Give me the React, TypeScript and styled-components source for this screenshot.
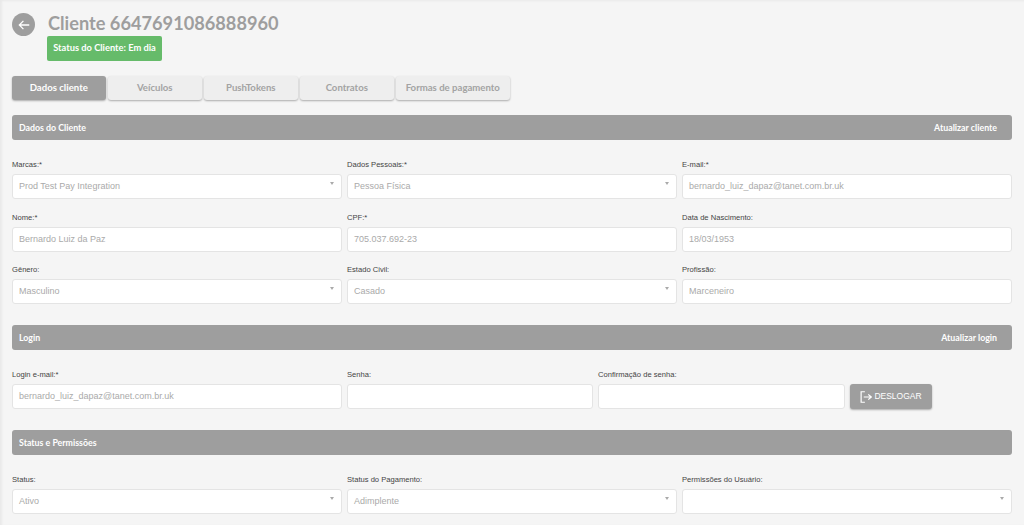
import React from "react";
import styled, { createGlobalStyle } from "styled-components";

const GlobalStyle = createGlobalStyle`
  html, body {
    margin: 0;
    padding: 0;
    background: #f5f5f5;
  }
  * { box-sizing: border-box; }
`;

const headingFont = `Lato, "Open Sans", sans-serif`;
const bodyFont = `"Liberation Sans", Arial, sans-serif`;

type FieldData = { label: string; value?: string; required?: boolean; select?: boolean };

const clientFields: FieldData[] = [
  { label: "Marcas:", value: "Prod Test Pay Integration", required: true, select: true },
  { label: "Dados Pessoais:", value: "Pessoa Física", required: true, select: true },
  { label: "E-mail:", value: "bernardo_luiz_dapaz@tanet.com.br.uk", required: true },
  { label: "Nome:", value: "Bernardo Luiz da Paz", required: true },
  { label: "CPF:", value: "705.037.692-23", required: true },
  { label: "Data de Nascimento:", value: "18/03/1953" },
  { label: "Gênero:", value: "Masculino", select: true },
  { label: "Estado Civil:", value: "Casado", select: true },
  { label: "Profissão:", value: "Marceneiro" },
];

const statusFields: FieldData[] = [
  { label: "Status:", value: "Ativo", select: true },
  { label: "Status do Pagamento:", value: "Adimplente", select: true },
  { label: "Permissões do Usuário:", select: true },
];

const tabs = ["Dados cliente", "Veículos", "PushTokens", "Contratos", "Formas de pagamento"];

const Field = ({ label, value, required, select }: FieldData) => (
  <FieldBox>
    <Label>
      {label}
      {required && "*"}
    </Label>
    <Control>
      <span>{value}</span>
      {select && <Caret />}
    </Control>
  </FieldBox>
);

const SectionHeader = ({ title, action }: { title: string; action?: string }) => (
  <SectionBar>
    <span>{title}</span>
    {action && <span>{action}</span>}
  </SectionBar>
);

const App = () => {
  return (
    <Page>
      <GlobalStyle />
      <Header>
        <BackButton>
          <svg width="14" height="14" viewBox="0 0 24 24" fill="none" stroke="#fff" strokeWidth="2.2">
            <path d="M21 12H4M11 5l-7 7 7 7" />
          </svg>
        </BackButton>
        <div>
          <Title>Cliente 6647691086888960</Title>
          <StatusBadge>Status do Cliente: Em dia</StatusBadge>
        </div>
      </Header>

      <Tabs>
        {tabs.map((tab, index) => (
          <Tab key={tab} $active={index === 0} $wide={index === 4}>
            {tab}
          </Tab>
        ))}
      </Tabs>

      <SectionHeader title="Dados do Cliente" action="Atualizar cliente" />
      <ThreeCols>
        {clientFields.map((field) => (
          <Field key={field.label} {...field} />
        ))}
      </ThreeCols>

      <SectionHeader title="Login" action="Atualizar login" />
      <LoginRow>
        <Field label="Login e-mail:" value="bernardo_luiz_dapaz@tanet.com.br.uk" required />
        <Field label="Senha:" />
        <Field label="Confirmação de senha:" />
        <LogoutButton>
          <svg width="12" height="12" viewBox="0 0 16 16" fill="none" stroke="#fff" strokeWidth="1.6">
            <path d="M6.5 1H1.5v14h5M5 8h10M11 4.5 15 8l-4 3.5" />
          </svg>
          DESLOGAR
        </LogoutButton>
      </LoginRow>

      <SectionHeader title="Status e Permissões" />
      <ThreeCols>
        {statusFields.map((field) => (
          <Field key={field.label} {...field} />
        ))}
      </ThreeCols>
    </Page>
  );
};

const Page = styled.div`
  height: 525px;
  overflow: hidden;
  padding: 13px 12px 0;
  background: #f5f5f5;
  box-shadow: inset 2px 1px 2px #e9e9e9;
`;

const Header = styled.header`
  display: flex;
  gap: 13px;
`;

const BackButton = styled.div`
  display: flex;
  align-items: center;
  justify-content: center;
  width: 23px;
  height: 23px;
  border-radius: 50%;
  background: #9e9e9e;
`;

const Title = styled.h1`
  margin: -1px 0 1px;
  font: 700 18.2px/23px ${headingFont};
  color: #9e9e9e;
`;

const StatusBadge = styled.div`
  width: 115px;
  height: 25px;
  margin: 0 0 0 -1px;
  border-radius: 2px;
  background: #66bb6a;
  color: #fff;
  font: 700 9.3px/24px ${headingFont};
  text-align: center;
  white-space: nowrap;
`;

const Tabs = styled.nav`
  display: flex;
  gap: 2.5px;
  margin-top: 15px;
`;

const Tab = styled.div<{ $active: boolean; $wide: boolean }>`
  width: ${({ $wide }) => ($wide ? "113.5px" : "93.5px")};
  height: 24px;
  border-radius: 3px;
  background: ${({ $active }) => ($active ? "#9e9e9e" : "#eeeeee")};
  color: ${({ $active }) => ($active ? "#fff" : "#a3a3a3")};
  box-shadow: 0 1px 2px rgba(0, 0, 0, 0.3);
  font: 700 9.6px/23px ${headingFont};
  text-align: center;
  white-space: nowrap;
`;

const SectionBar = styled.div`
  display: flex;
  justify-content: space-between;
  align-items: center;
  height: 25px;
  margin-top: 15px;
  padding: 0 15px 0 7px;
  border-radius: 3px;
  background: #9e9e9e;
  color: #fff;
  font: 700 8.8px/25px ${headingFont};
`;

const ThreeCols = styled.div`
  display: grid;
  grid-template-columns: repeat(3, 330px);
  gap: 11.5px 5px;
  margin-top: 18px;
  margin-bottom: 21px;
`;

const LoginRow = styled.div`
  display: grid;
  grid-template-columns: 330px 246px 247px 82px;
  gap: 5px;
  align-items: end;
  margin-top: 18px;
  margin-bottom: 21px;
`;

const FieldBox = styled.div`
  min-width: 0;
`;

const Label = styled.div`
  height: 12px;
  margin-bottom: 4px;
  font: 400 7.6px/14px ${bodyFont};
  color: #444;
`;

const Control = styled.div`
  position: relative;
  height: 25px;
  padding-left: 6px;
  border: 1px solid #e4e4e4;
  border-radius: 3px;
  background: #fff;
  color: #aaaaaa;
  font: 400 9px/23px ${bodyFont};
`;

const Caret = styled.i`
  position: absolute;
  top: 7px;
  right: 7px;
  border-left: 2px solid transparent;
  border-right: 2px solid transparent;
  border-top: 3px solid #aaa;
`;

const LogoutButton = styled.div`
  display: flex;
  align-items: center;
  justify-content: center;
  gap: 2px;
  height: 25px;
  border-radius: 3px;
  background: #9e9e9e;
  color: #fff;
  box-shadow: 0 1px 2px rgba(0, 0, 0, 0.3);
  font: 400 8.5px/25px ${bodyFont};
`;

export default App;
